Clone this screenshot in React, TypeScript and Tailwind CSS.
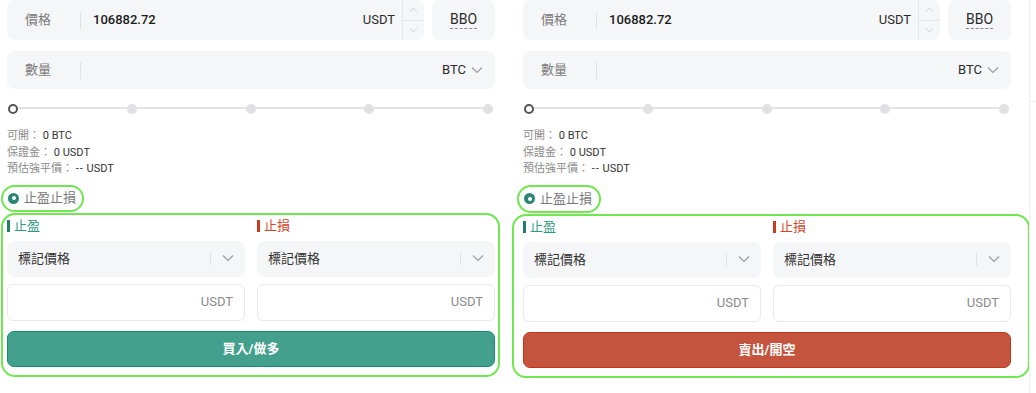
import React from "react"

type Side = "buy" | "sell"

/** Small chevron used in selects and steppers */
function Chevron({ up = false, className = "" }: { up?: boolean; className?: string }) {
  return (
    <svg viewBox="0 0 12 7" className={className} fill="none" stroke="currentColor" strokeWidth={1.1}>
      {up ? <polyline points="1,6.5 6,1.5 11,6.5" /> : <polyline points="1,0.5 6,5.5 11,0.5" />}
    </svg>
  )
}

/** Price input with stepper */
function PriceRow() {
  return (
    <div className="flex gap-[8px]">
      <div className="flex h-[40px] flex-1 items-center rounded-[8px] bg-[#f5f6f7]">
        <div className="flex w-[74px] items-center justify-between pl-[18px]">
          <span className="text-[13px] text-[#7d7d7d]">價格</span>
          <span className="h-[17px] w-px bg-[#e1e2e4]" />
        </div>
        <span className="flex-1 pl-[12px] text-[13px] font-medium text-[#1b1b1b]">106882.72</span>
        <span className="pr-[7px] text-[13px] text-[#2b2b2b]">USDT</span>
        <div className="flex h-full w-[22px] flex-col border-l border-[#e6e7e9]">
          <div className="flex flex-1 items-center justify-center border-b border-[#e6e7e9] text-[#c4c4c4]">
            <Chevron up className="h-[5px] w-[9px]" />
          </div>
          <div className="flex flex-1 items-center justify-center text-[#c4c4c4]">
            <Chevron className="h-[5px] w-[9px]" />
          </div>
        </div>
      </div>
      <div className="flex h-[40px] w-[63px] items-center justify-center rounded-[8px] bg-[#f5f6f7]">
        <span className="border-b border-dashed border-[#8a8a8a] pb-[1px] text-[14px] leading-[16px] text-[#2b2b2b]">BBO</span>
      </div>
    </div>
  )
}

/** Quantity input with unit selector */
function QuantityRow() {
  return (
    <div className="mt-[11px] flex h-[38px] items-center rounded-[8px] bg-[#f5f6f7]">
      <div className="flex w-[74px] items-center justify-between pl-[18px]">
        <span className="text-[13px] text-[#7d7d7d]">數量</span>
        <span className="h-[17px] w-px bg-[#e1e2e4]" />
      </div>
      <span className="flex-1" />
      <span className="text-[13px] text-[#2b2b2b]">BTC</span>
      <Chevron className="ml-[5px] mr-[12px] h-[7px] w-[12px] text-[#9a9a9a]" />
    </div>
  )
}

/** Leverage slider: track + 5 stops */
function Slider() {
  return (
    <div className="relative flex h-[39px] items-center justify-between pl-[1px] pr-[2px]">
      <div className="absolute left-[6px] right-[7px] top-[18px] h-[2px] bg-[#e4e4e7]" />
      <span className="relative h-[10px] w-[10px] rounded-full border-2 border-[#555] bg-white" />
      <span className="relative h-[10px] w-[10px] rounded-full bg-[#e1e1e3]" />
      <span className="relative h-[10px] w-[10px] rounded-full bg-[#e1e1e3]" />
      <span className="relative h-[10px] w-[10px] rounded-full bg-[#e1e1e3]" />
      <span className="relative h-[10px] w-[10px] rounded-full bg-[#e1e1e3]" />
    </div>
  )
}

/** Select + input for one TP/SL column */
function TpSlColumn({ label, tone }: { label: string; tone: "tp" | "sl" }) {
  return (
    <div className="flex w-[238px] flex-col">
      <div className="flex h-[16px] items-center">
        <span className={tone === "tp" ? "h-[12px] w-[3px] bg-[#237f6b]" : "h-[12px] w-[3px] bg-[#c73b20]"} />
        <span className={tone === "tp" ? "ml-[4px] text-[13px] text-[#2e9a84]" : "ml-[4px] text-[13px] text-[#d2462b]"}>
          {label}
        </span>
      </div>
      <div className="mt-[7px] flex h-[36px] items-center rounded-[8px] bg-[#f5f6f7] pl-[11px]">
        <span className="flex-1 text-[13px] text-[#333]">標記價格</span>
        <span className="h-[13px] w-px bg-[#e1e2e4]" />
        <Chevron className="ml-[11px] mr-[11px] h-[7px] w-[12px] text-[#9a9a9a]" />
      </div>
      <div className="mt-[7px] flex h-[37px] items-center justify-end rounded-[6px] border border-[#e8e9eb] bg-white pr-[11px]">
        <span className="text-[13px] text-[#8a8a8a]">USDT</span>
      </div>
    </div>
  )
}

function OrderPanel({
  side,
  className,
  radioClass,
  boxClass,
}: {
  side: Side
  className: string
  radioClass: string
  boxClass: string
}) {
  const isBuy = side === "buy"

  return (
    <div className={className}>
      <div className="w-[488px]">
        <PriceRow />
        <QuantityRow />
        <Slider />

        {/* Available / margin / liquidation */}
        <div className="text-[11px] leading-[16.5px] text-[#8a8a8a]">
          <div>
            可開： <span className="text-[#333]">0 BTC</span>
          </div>
          <div>
            保證金： <span className="text-[#333]">0 USDT</span>
          </div>
          <div>
            預估強平價： <span className="text-[#333]"><span className="tracking-[1px]">--</span> USDT</span>
          </div>
        </div>

        {/* TP/SL toggle */}
        <div className={radioClass}>
          <span className="flex h-[11px] w-[11px] items-center justify-center rounded-full bg-[#2b8675]">
            <span className="h-[4px] w-[4px] rounded-full bg-white" />
          </span>
          <span className="ml-[5px] text-[13px] text-[#7a7a7a]">止盈止損</span>
        </div>
      </div>

      {/* TP/SL section + submit */}
      <div className={boxClass}>
        <div className="w-[488px]">
          <div className="flex justify-between">
            <TpSlColumn label="止盈" tone="tp" />
            <TpSlColumn label="止損" tone="sl" />
          </div>
          {isBuy ? (
            <button className="mt-[10px] flex h-[36px] w-full items-center justify-center rounded-[7px] border border-[#178c72] bg-[#43a08c] text-[13px] font-bold text-white">
              買入/做多
            </button>
          ) : (
            <button className="mt-[10px] flex h-[36px] w-full items-center justify-center rounded-[7px] border border-[#c2361a] bg-[#c5543e] text-[13px] font-bold text-white">
              賣出/開空
            </button>
          )}
        </div>
      </div>
    </div>
  )
}

export default function App() {
  return (
    <div
      className="flex h-[393px] w-[1036px] overflow-hidden bg-white"
      style={{ fontFamily: '"Roboto", "Noto Sans CJK TC", sans-serif' }}
    >
      <OrderPanel
        side="buy"
        className="w-[516px] shrink-0 pl-[7px]"
        radioClass="-ml-[6px] mt-[7px] flex h-[27px] w-[83px] items-center rounded-full border-2 border-[#70e650] pl-[5px]"
        boxClass="-ml-[6px] mt-[1px] w-[499px] rounded-[14px] border-2 border-[#70e650] pb-[8px] pl-[4px] pt-[3px]"
      />
      <OrderPanel
        side="sell"
        className="w-[513px] shrink-0 pl-[7px]"
        radioClass="-ml-[6px] mt-[7px] flex h-[28px] w-[84px] items-center rounded-full border-2 border-[#70e650] pl-[5px]"
        boxClass="-ml-[11px] mt-[1px] w-[518px] rounded-[14px] border-2 border-[#70e650] pb-[8px] pl-[9px] pt-[3px]"
      />
      {/* edge of neighbouring column */}
      <div className="flex flex-1 flex-col border-l border-[#eeeeef]">
        <div className="h-[102px] border-b border-[#eeeeef]" />
      </div>
    </div>
  )
}
